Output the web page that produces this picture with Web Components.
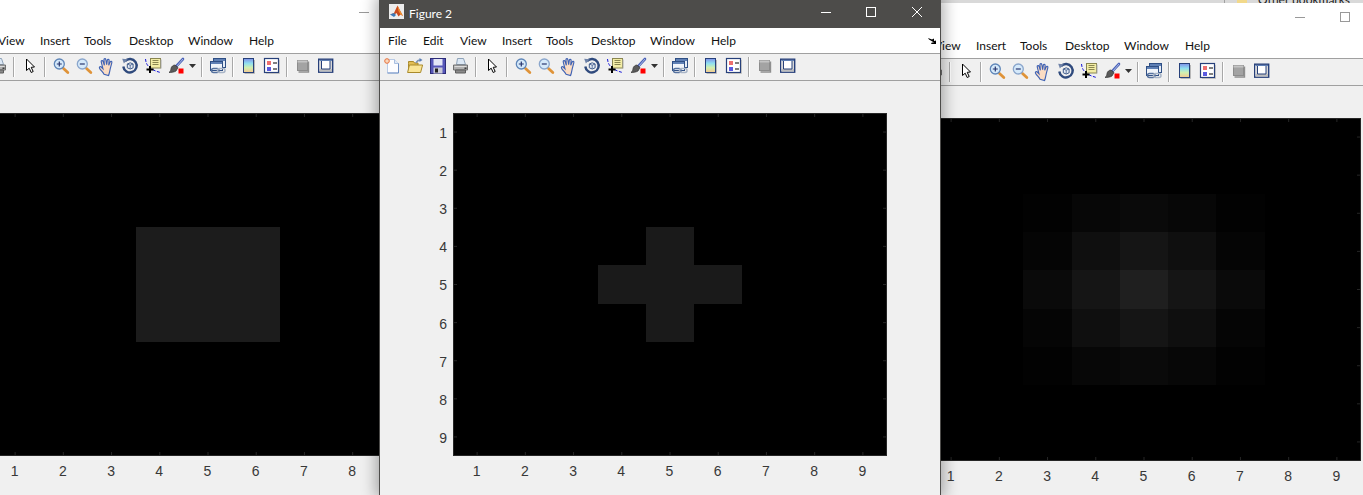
<!DOCTYPE html>
<html>
<head>
<meta charset="utf-8">
<title>Figures</title>
<style>
	html, body { margin: 0; height: 100%; }
	body { width: 1363px; height: 495px; overflow: hidden; background: #d9d9d9; position: relative; }
</style>
</head>
<body>
	<back-window></back-window>

	<fig-window skip="2" style="left:-83px;top:-2px;bottom:0;z-index:1">
		<fig-axes noylabels data="0 0 0 0 0 0 0 0 0;0 0 0 0 0 0 0 0 0;0 0 0 0 0 0 0 0 0;0 0 0 28 28 28 0 0 0;0 0 0 28 28 28 0 0 0;0 0 0 28 28 28 0 0 0;0 0 0 0 0 0 0 0 0;0 0 0 0 0 0 0 0 0;0 0 0 0 0 0 0 0 0"></fig-axes>
	</fig-window>

	<fig-window skip="2" style="left:853px;top:3px;bottom:0;z-index:1">
		<fig-axes noylabels data="0 0 0 0 0 0 0 0 0;0 0 0 0 0 0 0 0 0;0 0 2 7 10 7 2 0 0;0 0 5 15 21 15 5 0 0;0 0 10 21 31 21 10 0 0;0 0 5 15 21 15 5 0 0;0 0 2 7 10 7 2 0 0;0 0 0 0 0 0 0 0 0;0 0 0 0 0 0 0 0 0"></fig-axes>
	</fig-window>

	<fig-window caption="Figure 2" active style="left:379px;top:-2px;bottom:0;z-index:2">
		<fig-axes data="0 0 0 0 0 0 0 0 0;0 0 0 0 0 0 0 0 0;0 0 0 0 0 0 0 0 0;0 0 0 0 26 0 0 0 0;0 0 0 26 26 26 0 0 0;0 0 0 0 26 0 0 0 0;0 0 0 0 0 0 0 0 0;0 0 0 0 0 0 0 0 0;0 0 0 0 0 0 0 0 0"></fig-axes>
	</fig-window>

<script>
	const ICONS = {
		newfile: `<path d="M3.500 1.500h7l4 4v9.500h-11z" fill="#fdfdff" stroke="#b9cbe6"/><path d="M10.500 1.500v4h4" fill="#dfe8f5" stroke="#a9bfe0"/><path d="M14.500 5.500v9.500h-11" fill="none" stroke="#6f8fc4"/><circle cx="3" cy="3" r="2.300" fill="#f9d8bd" stroke="#e8703a"/>`,
		open: `<path d="M1.500 5.500v-2h5l1 1.500h3.500v8.500h-9.500z" fill="#e2bd55" stroke="#a98a2b"/><path d="M.6 14.500l1.800-7.500h13.200l-2 7.500z" fill="#fae596" stroke="#a98a2b"/><path d="M9 5c.8-2 2.500-3 4.500-3" fill="none" stroke="#7d95b8" stroke-width="1.300"/><path d="M12.500 0l3 2-3 2z" fill="#5b7fb5"/>`,
		save: `<rect x=".5" y=".5" width="15" height="15" fill="#5656b8" stroke="#2c2c78"/><rect x="3.500" y="1" width="9" height="6.500" fill="#e4e6f6"/><rect x="3.500" y="9.500" width="9" height="6" fill="#c9c9d8"/><rect x="5" y="10.500" width="3" height="4" fill="#222"/>`,
		print: `<path d="M4.500 .5h6l2 6h-9z" fill="#dce8f5" stroke="#8ea2b8"/><path d="M.5 7h14v5h-14z" fill="#b0b0b0" stroke="#707070"/><path d="M2.500 12h10v3h-10z" fill="#8a8a8a" stroke="#5c5c5c"/><path d="M1.500 8.500h12" stroke="#dcdcdc"/><rect x="11.500" y="9.500" width="2" height="1.500" fill="#3d3d3d"/>`,
		pointer: `<path d="M4.500 1v11.500l2.700-2.300 2 4.300 2-1-2-4.200 3.300-.3z" fill="#fff" stroke="#000" stroke-linejoin="round"/>`,
		zoomin: `<path d="M10.500 10.500l4.300 4" stroke="#df9338" stroke-width="2.800" stroke-linecap="round"/><circle cx="6.300" cy="6" r="5" fill="#d5e9fa" stroke="#5f86b8" stroke-width="1.300"/><path d="M3.800 6h5M6.300 3.500v5" stroke="#27356e" stroke-width="1.200"/>`,
		zoomout: `<path d="M10.500 10.500l4.300 4" stroke="#df9338" stroke-width="2.800" stroke-linecap="round"/><circle cx="6.300" cy="6" r="5" fill="#d5e9fa" stroke="#8aa6cc" stroke-width="1.300"/><path d="M3.800 6h5" stroke="#27356e" stroke-width="1.200"/>`,
		pan: `<g transform="translate(-.6 -.6) scale(1.130)"><path d="M5 15c-1-2-3-3.500-4-5.500-.5-1 .7-1.800 1.500-1l1.500 1.500-1.500-6c-.3-1.200 1.200-1.600 1.600-.5l1.200 3.500-.4-5c0-1.200 1.500-1.200 1.700 0l.7 4.500.6-4c.2-1.200 1.700-1 1.600.2l-.4 4.300 1.300-3c.5-1 1.800-.5 1.500.6l-1.400 5.400c-.5 2-.6 3.500-1.500 6z" fill="#fbdcc3" stroke="#3f62b4"/></g>`,
		rotate: `<path d="M3 3.200A6.700 6.700 0 1 1 1.300 8.500" fill="none" stroke="#2f4a7d" stroke-width="2.400"/><path d="M.2 .8l5.500 .4-3.800 4.400z" fill="#6f83a8"/><path d="M5.300 6l2.900-1.200 2.900 1.200v3.800l-2.900 1.200-2.900-1.200z" fill="#e6ecf5" stroke="#3f5b8a"/><path d="M5.300 6l2.900 1.200 2.900-1.200M8.200 7.200v3.500" fill="none" stroke="#3f5b8a" stroke-width=".8"/>`,
		cursor: `<path d="M.5 1c.3 5 3 10.500 15 13.500" fill="none" stroke="#1414d8" stroke-dasharray="3 1.500"/><rect x="5.500" y=".5" width="10" height="9.500" fill="#f3eda6" stroke="#8a8650"/><path d="M7.500 2.500h6M7.500 4.500h6M7.500 6.500h6" stroke="#8a8650"/><rect x="15.500" y="1.500" width="1" height="9" fill="#aaa"/><path d="M5 8v7M1.500 11.500h7" stroke="#000" stroke-width="2"/>`,
		brush: `<path d="M15 1L8 8.500" stroke="#4a62b8" stroke-width="2.600" stroke-linecap="round"/><path d="M15 1l-6 7" stroke="#c6d2f0" stroke-width=".8"/><path d="M7 7l3 2.500-2 3.500c-1.800 1.200-5 1.500-7 1.500 1.500-1 1.800-2.500 2-4 .3-2 2.300-3.500 4-3.500z" fill="#5a5a5a" stroke="#333" stroke-width=".7"/><rect x="10.500" y="10.500" width="5" height="5" fill="#f00"/>`,
		link: `<rect x="3.500" y=".5" width="12" height="9" fill="#e6edf7" stroke="#2f4f85"/><rect x="4" y="1" width="11" height="2" fill="#5f80b5"/><rect x=".5" y="3.500" width="12" height="9" fill="#f0f4fa" stroke="#2f4f85"/><rect x="1" y="4" width="11" height="2" fill="#5f80b5"/><rect x="1.500" y="10.500" width="7.500" height="4" rx="2" fill="none" stroke="#56729f" stroke-width="1.500"/><rect x="7.500" y="10.500" width="7.500" height="4" rx="2" fill="none" stroke="#a8b4c6" stroke-width="1.500"/>`,
		colorbar: `<defs><linearGradient id="cb" x1="0" y1="0" x2="0" y2="1"><stop offset="0" stop-color="#7f8fe8"/><stop offset=".35" stop-color="#8fdff0"/><stop offset=".65" stop-color="#d0efb0"/><stop offset="1" stop-color="#f5c890"/></linearGradient></defs><rect x="2.500" y=".5" width="10" height="14" fill="url(#cb)" stroke="#27407a"/><path d="M13.500 2v13.500h-10" fill="none" stroke="#b8b8b8"/>`,
		legend: `<rect x=".5" y=".5" width="14" height="14" fill="#fff" stroke="#27407a" stroke-width="1.200"/><path d="M15.500 2v13.500H2" fill="none" stroke="#c0c0c0"/><rect x="3" y="3" width="4" height="4" fill="#ef6f6f"/><rect x="3" y="9" width="4" height="4" fill="#5a5ae0"/><path d="M9 5h4M9 11h4" stroke="#000"/>`,
		hide: `<rect x="2.500" y="2.500" width="10" height="10" fill="#a3a3a3" stroke="#8c8c8c"/><rect x="2.500" y="2.500" width="10" height="2" fill="#c4c4c4"/><path d="M13.500 3.500v10.500H3.500" fill="none" stroke="#8f8f8f" stroke-width="1.400"/>`,
		plot: `<rect x=".7" y="1.200" width="14" height="13" fill="#fff" stroke="#27407a" stroke-width="1.400"/><rect x="1.500" y="11" width="12.500" height="2.500" fill="#bdbdbd"/><rect x="1.500" y="2" width="12.500" height="1" fill="#5f80b5"/><rect x="1.500" y="3" width="2" height="8" fill="#d8d8d8"/><rect x="12" y="3" width="2" height="8" fill="#d8d8d8"/><path d="M3.500 3v8h8.500V3" fill="none" stroke="#27407a"/>`
	};

	class BackWindow extends HTMLElement {
		constructor() {
			super();
			this.attachShadow({ mode: 'open' });
			// окно на заднем плане, видна только полоска сверху
			this.shadowRoot.innerHTML = `
				<style>
					:host { position: absolute; left: 1224px; top: 0; right: 0; height: 3px; display: block; background: #d9d9d9; border-left: 1px solid #a0a0a0; overflow: hidden; }
					.file { position: absolute; left: 12px; top: -2px; width: 10px; height: 9px; background: #f2d98a; }
					span { position: absolute; left: 33px; top: -8px; font: 12px Lato, sans-serif; color: #222; white-space: nowrap; }
				</style>
				<div class="file"></div>
				<span>Other bookmarks</span>
			`;
		}
	}

	class FigMenubar extends HTMLElement {
		constructor() {
			super();
			this.attachShadow({ mode: 'open' });
			const skip = Number(this.getAttribute('skip') || 0);
			const items = ['File', 'Edit', 'View', 'Insert', 'Tools', 'Desktop', 'Window', 'Help'];
			this.shadowRoot.innerHTML = `
				<style>
					:host { display: grid; grid-template-columns: 35px 37px 42px 44px 45px 59px 61px 1fr; height: 25px; padding-left: 8px; align-items: center; background: #fff; border-bottom: 1px solid #a0a0a0; font: 12px Lato, sans-serif; color: #111; position: relative; }
					span { white-space: nowrap; }
					svg { position: absolute; right: 4px; top: 10px; }
				</style>
				${items.map((t, i) => `<span>${i < skip ? '' : t}</span>`).join('')}
				<svg width="8" height="6" viewBox="0 0 8 6"><path d="M0 0l4 1.500L6 .5V3l2-.5V6H3l.8-1.500H6L1 1.500z" fill="#000"/></svg>
			`;
		}
	}

	class FigToolbar extends HTMLElement {
		constructor() {
			super();
			this.attachShadow({ mode: 'open' });
			const layout = ['newfile', 'open', 'save', 'print', '|', 'pointer', '|', 'zoomin', 'zoomout', 'pan', 'rotate', 'cursor', 'brush', 'v', '|', 'link', '|', 'colorbar', 'legend', '|', 'hide', 'plot'];
			const html = layout.map((name) => {
				if (name === '|') return '<i></i>';
				if (name === 'v') return '<b><svg width="7" height="4" viewBox="0 0 7 4"><path d="M0 0h7L3.500 4z" fill="#333"/></svg></b>';
				return `<a><svg width="16" height="16" viewBox="0 0 16 16" style="overflow:visible">${ICONS[name]}</svg></a>`;
			}).join('');
			this.shadowRoot.innerHTML = `
				<style>
					:host { display: flex; align-items: center; height: 26px; background: #f0f0f0; border-bottom: 1px solid #a0a0a0; }
					a { width: 23px; height: 26px; box-sizing: border-box; padding-bottom: 2px; display: flex; align-items: center; justify-content: center; }
					b { width: 11px; height: 26px; box-sizing: border-box; padding-bottom: 2px; display: flex; align-items: center; justify-content: center; }
					i { width: 8px; height: 20px; display: block; position: relative; }
					i::after { content: ''; position: absolute; left: 3px; top: 0; bottom: 0; width: 1px; background: #a8a8a8; border-right: 1px solid #fff; }
				</style>
				${html}
			`;
		}
	}

	class FigAxes extends HTMLElement {
		constructor() {
			super();
			this.attachShadow({ mode: 'open' });
		}

		connectedCallback() {
			this.render();
		}

		render() {
			const rows = this.getAttribute('data').split(';').map((r) => r.trim().split(/\s+/).map(Number));
			const nums = [1, 2, 3, 4, 5, 6, 7, 8, 9];
			const cells = rows.flat().map((v) => `<div style="background:rgb(${v},${v},${v})"></div>`).join('');
			const cw = 434 / 9;
			const ch = 343 / 9;
			let ticks = '';
			nums.forEach((n, i) => {
				const x = (i + 0.5) * cw;
				const y = (i + 0.5) * ch;
				ticks += `M${x} 0v4M${x} 343v-4M0 ${y}h4M434 ${y}h-4`;
			});
			const ylabels = this.hasAttribute('noylabels') ? nums.map(() => '<span></span>') : nums.map((n) => `<span>${n}</span>`);
			this.shadowRoot.innerHTML = `
				<style>
					:host { display: grid; grid-template-columns: 73px 434px; grid-template-rows: 343px auto; padding-top: 32px; font: 14px "Liberation Sans", Arial, sans-serif; color: #383838; }
					.ylab { display: grid; grid-template-rows: repeat(9, 1fr); justify-items: end; align-items: center; padding-right: 6px; }
					.ylab span { padding-top: 2px; }
					.plot { position: relative; display: grid; grid-template-columns: repeat(9, 1fr); grid-template-rows: repeat(9, 1fr); background: #000; }
					.plot svg { position: absolute; inset: 0; }
					.xlab { grid-column: 2; display: grid; grid-template-columns: repeat(9, 1fr); justify-items: center; padding-top: 7px; line-height: 16px; }
					.xlab span { padding-right: 1px; }
				</style>
				<div class="ylab">${ylabels.join('')}</div>
				<div class="plot">
					${cells}
					<svg width="434" height="343" viewBox="0 0 434 343">
						<path d="${ticks}" stroke="#262626" fill="none"/>
						<rect x=".5" y=".5" width="433" height="342" fill="none" stroke="#262626"/>
					</svg>
				</div>
				<div class="xlab">${nums.map((n) => `<span>${n}</span>`).join('')}</div>
			`;
		}
	}

	class FigWindow extends HTMLElement {
		constructor() {
			super();
			this.attachShadow({ mode: 'open' });
		}

		connectedCallback() {
			const active = this.hasAttribute('active');
			const stroke = active ? '#fff' : '#999';
			const caption = this.getAttribute('caption') || '';
			const skip = this.getAttribute('skip') || '0';
			this.shadowRoot.innerHTML = `
				<style>
					:host { position: absolute; display: block; width: 560px; background: #f0f0f0; border: 1px solid #4d4c4a; border-top: none; border-bottom: none; overflow: hidden; }
					:host([active]) { box-shadow: 0 0 14px 3px rgba(0, 0, 0, .32); overflow: visible; }
					:host(:not([active])) { border-color: #c8c8c8; }
					.title { height: 30px; display: flex; align-items: center; background: ${active ? '#4d4c4a' : '#fff'}; color: ${active ? '#fff' : '#222'}; font: 12px Lato, sans-serif; padding-left: 9px; position: relative; box-sizing: border-box; }
					.title svg.logo { margin-bottom: 4px; }
					.title span { margin-left: 5px; }
					.ctl { position: absolute; top: 0; right: 0; display: flex; height: 30px; align-items: center; padding-bottom: 2px; box-sizing: border-box; }
					.ctl div { width: 46px; height: 28px; display: flex; align-items: center; justify-content: center; }
					.ctl div:first-child { padding-left: 2px; box-sizing: border-box; }
				</style>
				<div class="title">
					<svg class="logo" width="15" height="15" viewBox="0 0 15 15">
						<rect width="15" height="15" fill="#ececec"/>
						<path d="M1 10.500l4-1.500 3.500-7.500 2 4 3.500 6.500-2.500-1.500-2 2-2-3.500-2 1.500z" fill="#c94a1c"/>
						<path d="M8.500 1.500l2 4 3.500 6.500-2.500-1.500-2-3.500z" fill="#f09030"/>
						<path d="M1 10.500l4-1.500 2 2-2 2z" fill="#3a78b8"/>
					</svg>
					<span>${caption}</span>
					<div class="ctl">
						<div><svg width="10" height="10" viewBox="0 0 10 10"><path d="M0 5.500h10" stroke="${stroke}"/></svg></div>
						<div><svg width="10" height="10" viewBox="0 0 10 10"><rect x=".5" y=".5" width="9" height="9" fill="none" stroke="${stroke}"/></svg></div>
						<div><svg width="10" height="10" viewBox="0 0 10 10"><path d="M0 0l10 10M10 0L0 10" stroke="${stroke}"/></svg></div>
					</div>
				</div>
				<fig-menubar skip="${skip}"></fig-menubar>
				<fig-toolbar></fig-toolbar>
				<slot></slot>
			`;
		}
	}

	customElements.define('back-window', BackWindow);
	customElements.define('fig-menubar', FigMenubar);
	customElements.define('fig-toolbar', FigToolbar);
	customElements.define('fig-axes', FigAxes);
	customElements.define('fig-window', FigWindow);
</script>
</body>
</html>
